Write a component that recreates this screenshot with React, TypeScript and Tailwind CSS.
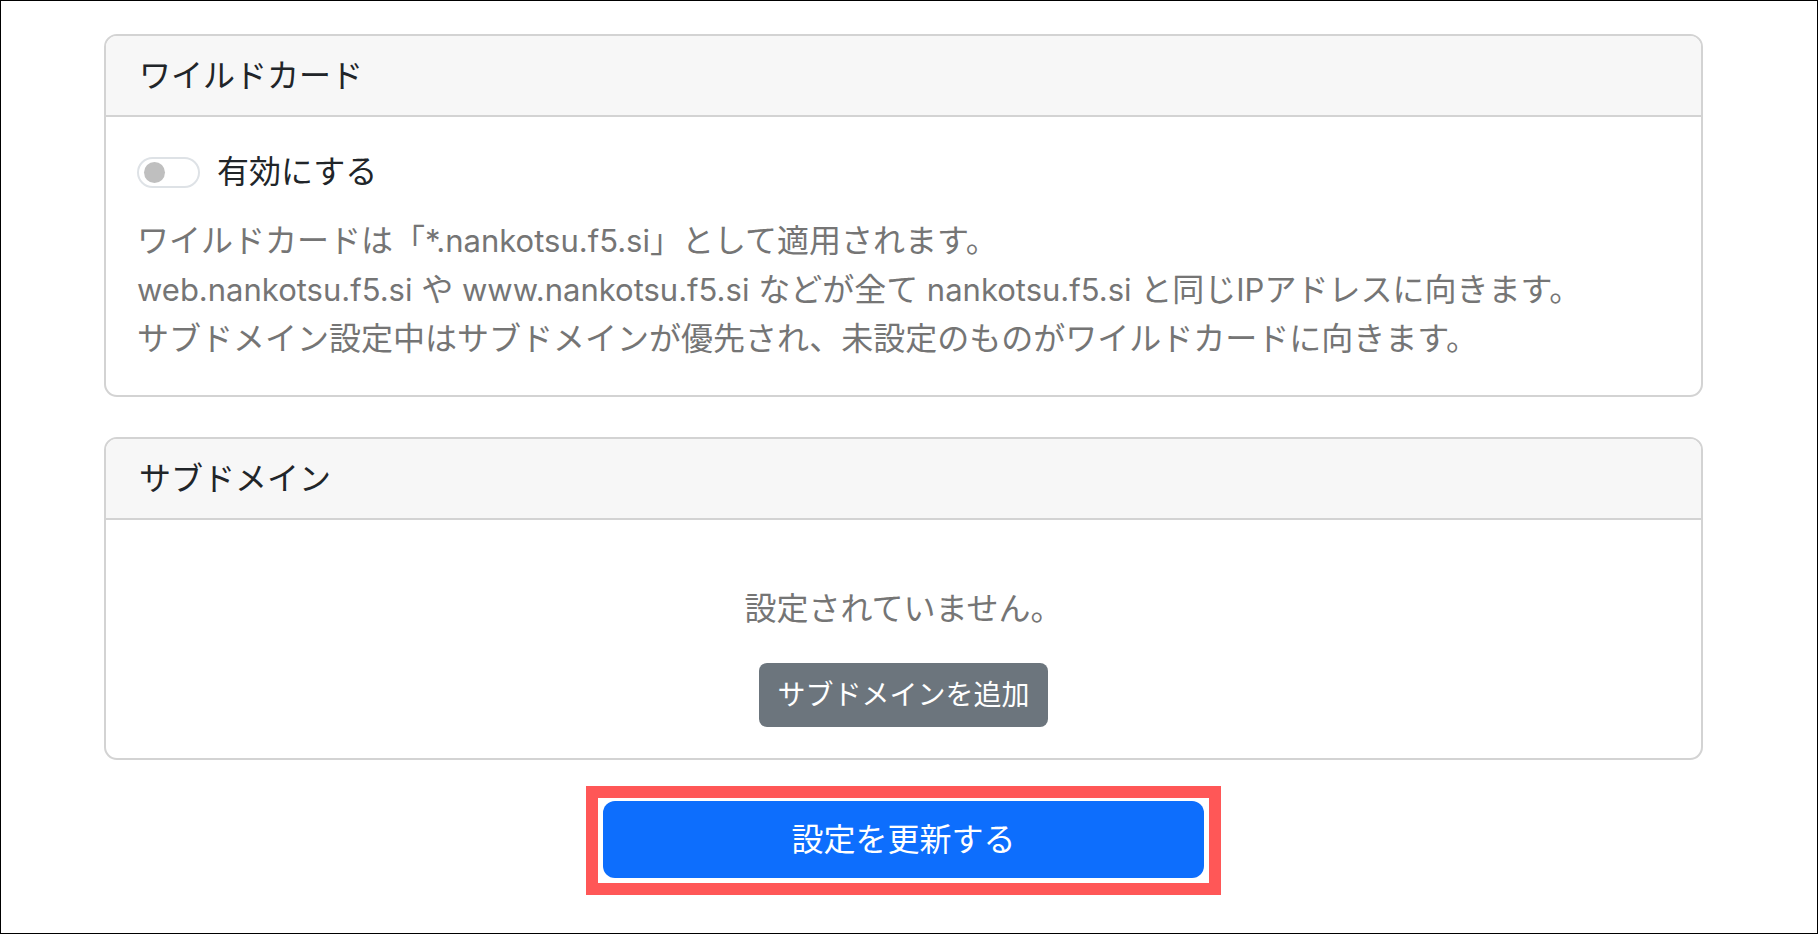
import React from "react";

const font = { fontFamily: '"Inter", "Noto Sans CJK JP", sans-serif' };

const L = ({ children }: { children: React.ReactNode }) => (
  <span className="text-[31px]">{children}</span>
);

export default function App() {
  return (
    <div
      className="w-[1818px] h-[934px] border border-black bg-white box-border overflow-hidden"
      style={font}
    >
      <div className="ml-[103px] w-[1599px] pt-[33px] flex flex-col">
        {/* Card 1 */}
        <div className="border-2 border-[#d3d3d3] rounded-[13px] overflow-hidden">
          <div className="h-[81px] bg-[#f7f7f7] border-b-2 border-[#d3d3d3] flex items-center px-[33px] text-[32px] text-[#212529] leading-[48px]">
            ワイルドカード
          </div>
          <div className="px-[31px] pt-[31px] pb-[32px]">
            <div className="flex items-center h-[48px]">
              <div className="w-[63px] h-[31px] rounded-full border-2 border-[#dee2e6] bg-white flex items-center pl-[5px] box-border">
                <div className="w-[21px] h-[21px] rounded-full bg-[#bfbfbf]" />
              </div>
              <span className="ml-[17px] text-[32px] leading-[48px] text-[#212529]">
                有効にする
              </span>
            </div>
            <div className="mt-[20px] text-[32px] leading-[49px] text-[#757575]">
              <div>
                ワイルドカードは「<L>*.nankotsu.f5.si</L>」として適用されます。
              </div>
              <div>
                <L>web.nankotsu.f5.si </L>や<L> www.nankotsu.f5.si </L>などが全て
                <L> nankotsu.f5.si </L>と同じ<L>IP</L>アドレスに向きます。
              </div>
              <div>
                サブドメイン設定中はサブドメインが優先され、未設定のものがワイルドカードに向きます。
              </div>
            </div>
          </div>
        </div>

        {/* Card 2 */}
        <div className="mt-[40px] border-2 border-[#d3d3d3] rounded-[13px] overflow-hidden">
          <div className="h-[81px] bg-[#f7f7f7] border-b-2 border-[#d3d3d3] flex items-center px-[33px] text-[32px] text-[#212529] leading-[48px]">
            サブドメイン
          </div>
          <div className="pt-[65px] pb-[31px] flex flex-col items-center">
            <div className="text-[32px] leading-[48px] text-[#757575]">
              設定されていません。
            </div>
            <button className="mt-[30px] h-[64px] px-[18px] rounded-[8px] bg-[#6c757d] text-white text-[28px] leading-[40px]">
              サブドメインを追加
            </button>
          </div>
        </div>

        {/* Submit */}
        <div className="mt-[26px] flex justify-center">
          <div className="border-[12px] border-[#ff5757] pt-[3px] pb-[5px] px-[5px]">
            <button className="w-[601px] h-[77px] rounded-[12px] bg-[#0d6efd] text-white text-[32px] leading-[48px]">
              設定を更新する
            </button>
          </div>
        </div>
      </div>
    </div>
  );
}
